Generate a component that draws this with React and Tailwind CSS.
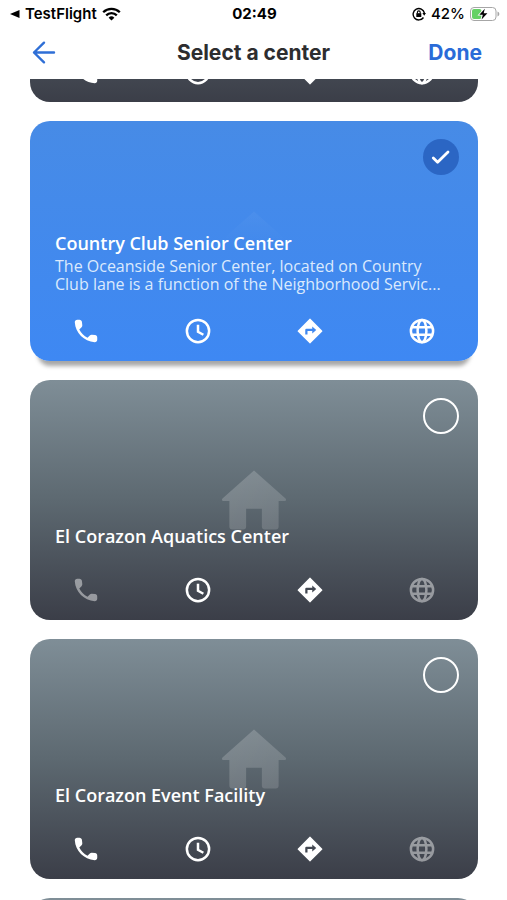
import React, { useState } from 'react';

const centers = [
  { id: 1, phone: true, website: true },
  {
    id: 2,
    name: 'Country Club Senior Center',
    description:
      'The Oceanside Senior Center, located on Country Club lane is a function of the Neighborhood Servic...',
    phone: true,
    website: true,
  },
  { id: 3, name: 'El Corazon Aquatics Center', phone: false, website: false },
  { id: 4, name: 'El Corazon Event Facility', phone: true, website: false },
];

const PhoneIcon = () => (
  <svg className="h-[30px] w-[30px]" viewBox="0 0 24 24" fill="currentColor">
    <path d="M19.230 15.260l-2.540-.290c-.610-.070-1.210.140-1.640.570l-1.840 1.840c-2.830-1.440-5.150-3.750-6.590-6.590l1.850-1.850c.430-.430.640-1.030.570-1.640l-.290-2.520c-.120-1.010-.970-1.770-1.990-1.770H5.030c-1.130 0-2.070.940-2 2.070.530 8.540 7.360 15.360 15.890 15.890 1.130.070 2.070-.870 2.070-2v-1.730c.010-1.010-.750-1.860-1.760-1.980z" />
  </svg>
);

const ClockIcon = () => (
  <svg className="h-[30px] w-[30px]" viewBox="0 0 24 24" fill="none" stroke="currentColor" strokeWidth="2">
    <circle cx="12" cy="12" r="8.900" />
    <path d="M12 7v5.700l4.300 2.300" />
  </svg>
);

const DirectionsIcon = () => (
  <svg className="h-[30px] w-[30px]" viewBox="0 0 24 24" fill="currentColor">
    <path
      fillRule="evenodd"
      d="M12.300 2.200 21.800 11.700q.3.300 0 .6L12.300 21.800q-.3.300-.6 0L2.200 12.300q-.3-.3 0-.6L11.700 2.200q.3-.3.600 0zM8.200 14.800v-3.700q0-.9.900-.9h4.700V8.300L17 11.100l-3.200 2.800v-1.900H10v2.800z"
    />
  </svg>
);

const GlobeIcon = () => (
  <svg className="h-[30px] w-[30px]" viewBox="0 0 24 24" fill="none" stroke="currentColor" strokeWidth="2">
    <circle cx="12" cy="12" r="8.900" />
    <ellipse cx="12" cy="12" rx="3.500" ry="8.900" />
    <path d="M3.500 9h17M3.500 15h17" />
  </svg>
);

const StatusBar = () => (
  <div className="grid h-7 shrink-0 grid-cols-3 items-center pl-[9px] pr-[7px] text-[15px] font-semibold text-black">
    <div className="flex items-center gap-[5px]">
      <svg className="h-[10px] w-[11px]" viewBox="0 0 11 10" fill="currentColor">
        <path d="M10.500 1v8L1 5z" />
      </svg>
      <span>TestFlight</span>
      <svg className="h-[14px] w-[19px]" viewBox="0 0 19 14" fill="none" stroke="currentColor" strokeWidth="2.300">
        <path d="M1.200 5.200a11.800 11.800 0 0 1 16.600 0" />
        <path d="M4.200 8.400a7.500 7.500 0 0 1 10.600 0" />
        <path d="M9.500 13.600 6.600 10.800a4.100 4.100 0 0 1 5.800 0z" fill="currentColor" stroke="none" />
      </svg>
    </div>
    <div className="text-center font-bold">02:49</div>
    <div className="flex items-center justify-end gap-[5px]">
      <svg className="h-[14px] w-[14px]" viewBox="0 0 14 14" fill="none" stroke="currentColor" strokeWidth="1.400">
        <path d="M11.500 10.500A5.700 5.700 0 1 1 12.400 6" />
        <path d="M10.400 6h3.600l-1.800 2.800z" fill="currentColor" stroke="none" />
        <rect x="4.300" y="6.200" width="5" height="3.800" fill="currentColor" stroke="none" />
        <path d="M5.400 6.500V5.300a1.400 1.400 0 0 1 2.800 0v1.200" strokeWidth="1.100" />
      </svg>
      <span className="font-medium">42%</span>
      <svg className="h-[14px] w-[30px]" viewBox="0 0 30 14" fill="none">
        <rect x="0.500" y="0.500" width="25.500" height="13" rx="3.500" stroke="#a6a6a6" />
        <path d="M27.500 4.500a2.600 2.600 0 0 1 0 5z" fill="#a6a6a6" />
        <rect x="2" y="2" width="9.500" height="10" rx="2" fill="#65d166" />
        <path
          d="M14.800 1.800 9.300 7.800h3.500l-1.200 4.600L17.400 6.200h-3.700z"
          fill="#000"
          stroke="#fff"
          strokeWidth="1.600"
          paintOrder="stroke"
        />
      </svg>
    </div>
  </div>
);

const Header = () => (
  <header className="grid h-[51px] shrink-0 grid-cols-[1fr_auto_1fr] items-center px-[25px] pb-[2px]">
    <button type="button" aria-label="Back" className="ml-[7px] w-6">
      <svg
        className="h-6 w-6"
        viewBox="0 0 24 24"
        fill="none"
        stroke="#2f6fd6"
        strokeWidth="2.400"
        strokeLinecap="round"
        strokeLinejoin="round"
      >
        <path d="M22 11.500H2M12 1.700 2 11.500l10 9.800" />
      </svg>
    </button>
    <h1 className="text-[21px] font-bold text-[#2d2d2f]">Select a center</h1>
    <button type="button" className="justify-self-end text-[21px] font-bold text-[#2a6bd8]">
      Done
    </button>
  </header>
);

// On the selected card only the tip of the roof is still visible
const House = ({ faded }) => (
  <svg className="absolute left-1/2 top-[90px] h-[60px] w-[65px] -translate-x-1/2" viewBox="0 0 66 60">
    <defs>
      <linearGradient id="house" x1="0" y1="0" x2="1" y2="1">
        <stop offset="0" stopColor="#fff" stopOpacity="0.200" />
        <stop offset="1" stopColor="#fff" stopOpacity="0.140" />
      </linearGradient>
      <linearGradient id="house-faded" x1="0" y1="0" x2="0" y2="1">
        <stop offset="0" stopColor="#fff" stopOpacity="0.040" />
        <stop offset="0.500" stopColor="#fff" stopOpacity="0" />
      </linearGradient>
    </defs>
    <path
      fill={faded ? 'url(#house-faded)' : 'url(#house)'}
      d="M33 0 65 28.500q1.500 2.500-1 2.500H58v26q0 3-3 3H44q-3 0-3-3V39H25v18q0 3-3 3H11q-3 0-3-3V31H2q-2.500 0-1-2.500z"
    />
  </svg>
);

const ActionButton = ({ icon: Icon, label, enabled = true }) => (
  <button
    type="button"
    aria-label={label}
    disabled={!enabled}
    className="flex flex-1 justify-center text-white disabled:opacity-45"
  >
    <Icon />
  </button>
);

const CenterCard = ({ center, selected, onSelect }) => (
  <article
    className={
      selected
        ? 'relative flex h-[240px] w-full shrink-0 flex-col justify-end rounded-[20px] bg-linear-to-b from-[#478be6] to-[#3e88f3] pb-[15px] text-white shadow-[0_13px_4px_-8px_rgba(0,0,0,0.35)]'
        : 'relative flex h-[240px] w-full shrink-0 flex-col justify-end rounded-[20px] bg-linear-to-b from-[#7f8e97] via-[#5d6971] to-[#3b3e48] pb-[15px] text-white'
    }
  >
    <House faded={selected} />
    <label className="absolute right-[19px] top-[18px] h-9 w-9 cursor-pointer">
      <input
        type="checkbox"
        aria-label={center.name || 'Center'}
        checked={selected}
        onChange={() => onSelect(center.id)}
        className="block h-9 w-9 appearance-none rounded-full border-2 border-white checked:border-0 checked:bg-[#2b66c4]"
      />
      {selected && (
        <svg
          className="pointer-events-none absolute inset-0 h-9 w-9"
          viewBox="0 0 36 36"
          fill="none"
          stroke="#fff"
          strokeWidth="2.800"
          strokeLinecap="round"
          strokeLinejoin="round"
        >
          <path d="M10.300 19l4.300 4.200L25 13" />
        </svg>
      )}
    </label>
    <div className="relative px-[25px]">
      {center.name && <h2 className="text-[18px] font-semibold leading-6">{center.name}</h2>}
      {center.description && (
        <p className="-mb-1 mt-0.5 text-[16px] leading-[18px] text-[#dbe9fd]">{center.description}</p>
      )}
    </div>
    <div className="mt-[27px] flex">
      <ActionButton icon={PhoneIcon} label="Call" enabled={center.phone} />
      <ActionButton icon={ClockIcon} label="Opening hours" />
      <ActionButton icon={DirectionsIcon} label="Directions" />
      <ActionButton icon={GlobeIcon} label="Website" enabled={center.website} />
    </div>
  </article>
);

export default function App() {
  const [selectedId, setSelectedId] = useState(2);
  const [first, ...rest] = centers;

  return (
    <div className="flex h-screen flex-col overflow-hidden bg-white font-['Inter',sans-serif]">
      <StatusBar />
      <Header />
      <main className="flex min-h-0 flex-1 flex-col gap-[19px] overflow-hidden pl-[30px] pr-[29px] font-['Open_Sans',sans-serif]">
        <div className="flex h-[23px] shrink-0 items-end overflow-hidden">
          <CenterCard center={first} selected={selectedId === first.id} onSelect={setSelectedId} />
        </div>
        {rest.map((center) => (
          <CenterCard
            key={center.id}
            center={center}
            selected={selectedId === center.id}
            onSelect={setSelectedId}
          />
        ))}
        <div className="h-[240px] shrink-0 rounded-[20px] bg-linear-to-b from-[#7f8e97] via-[#5d6971] to-[#3b3e48]" />
      </main>
    </div>
  );
}
